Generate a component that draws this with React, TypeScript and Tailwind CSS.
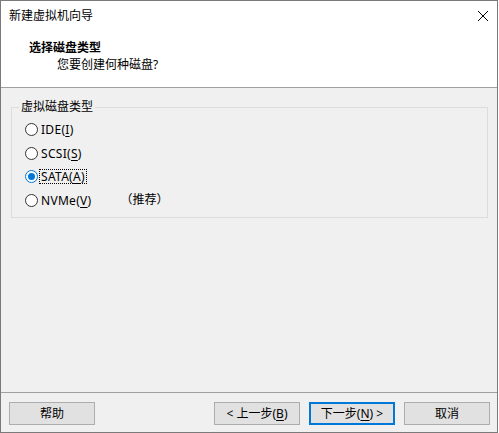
import React, { useState } from 'react';

const font = { fontFamily: '"Segoe UI", "Noto Sans", "Noto Sans CJK SC", sans-serif' };

const options = [
    { id: 'ide', label: 'IDE(', key: 'I', tail: ')' },
    { id: 'scsi', label: 'SCSI(', key: 'S', tail: ')' },
    { id: 'sata', label: 'SATA(', key: 'A', tail: ')' },
    { id: 'nvme', label: 'NVMe(', key: 'V', tail: ')', note: '（推荐）' },
];

const Radio = ({ checked }: { checked: boolean }) => (
    <span
        className={`flex h-[13px] w-[13px] shrink-0 items-center justify-center rounded-full border bg-white ${
            checked ? 'border-[#0078d7]' : 'border-[#333333]'
        }`}
    >
        {checked && <span className="h-[7px] w-[7px] rounded-full bg-[#0078d7]" />}
    </span>
);

const Button = ({ children, primary }: { children: React.ReactNode; primary?: boolean }) => (
    <button
        className={`flex h-[23px] w-[86px] items-center justify-center bg-[#e1e1e1] text-[12px] text-black ${
            primary ? 'border-2 border-[#0078d7]' : 'border border-[#adadad]'
        }`}
    >
        {children}
    </button>
);

const App = () => {
    const [selected, setSelected] = useState('sata');

    return (
        <div className="h-[433px] w-[499px] bg-white text-[12px] text-black" style={font}>
            <div className="flex h-[433px] w-[498px] flex-col border border-[#7a7a7a] bg-[#f0f0f0]">
                {/* title bar + header */}
                <div className="border-b border-[#a0a0a0] bg-white">
                    <div className="flex h-[29px] items-center justify-between pl-[8px] pr-[8px]">
                        <span className="leading-none">新建虚拟机向导</span>
                        <svg width="10" height="10" viewBox="0 0 10 10" className="mr-[1px]">
                            <path d="M0 0 L10 10 M10 0 L0 10" stroke="#000" strokeWidth="1" />
                        </svg>
                    </div>
                    <div className="h-[57px] pt-[10px]">
                        <div className="pl-[28px] font-bold leading-[16px]">选择磁盘类型</div>
                        <div className="pl-[56px] pt-[1px] leading-[16px]">您要创建何种磁盘?</div>
                    </div>
                </div>

                {/* body */}
                <div className="flex-1 px-[10px] pt-[12px]">
                    <fieldset className="h-[118px] w-[477px] border border-[#dcdcdc] pl-[13px] pt-[4px]">
                        <legend className="ml-[-6px] px-[2px] leading-[14px]">虚拟磁盘类型</legend>
                        <div className="flex flex-col">
                            {options.map((o) => (
                                <label
                                    key={o.id}
                                    className="flex h-[23.5px] cursor-default items-center"
                                    onClick={() => setSelected(o.id)}
                                >
                                    <Radio checked={selected === o.id} />
                                    <span
                                        className={`ml-[2px] px-[1px] leading-[13px] tracking-[0.3px] ${
                                            selected === o.id ? 'outline-1 outline-dotted outline-black' : ''
                                        }`}
                                    >
                                        {o.label}
                                        <span className="underline underline-offset-2">{o.key}</span>
                                        {o.tail}
                                    </span>
                                    {o.note && <span className="ml-[28px]">{o.note}</span>}
                                </label>
                            ))}
                        </div>
                    </fieldset>
                </div>

                {/* footer */}
                <div className="border-t border-[#a0a0a0] pb-[7px] pl-[8px] pr-[7px] pt-[9px]">
                    <div className="flex items-center">
                        <Button>帮助</Button>
                        <div className="ml-auto flex gap-[9px]">
                            <Button>
                                &lt; 上一步(<span className="underline underline-offset-2">B</span>)
                            </Button>
                            <Button primary>
                                下一步(<span className="underline underline-offset-2">N</span>) &gt;
                            </Button>
                            <Button>取消</Button>
                        </div>
                    </div>
                </div>
            </div>
        </div>
    );
};

export default App;
